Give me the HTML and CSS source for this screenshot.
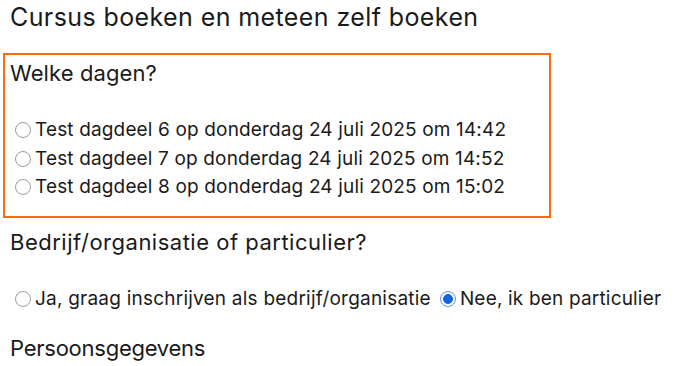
FILE: index.html
```html
<!DOCTYPE html>
<html lang="nl">
<head>
<meta charset="utf-8">
<link rel="stylesheet" href="styles.css">
</head>
<body>
<div class="page">
  <h1 class="title">Cursus boeken en meteen zelf boeken</h1>
  <div class="days-box">
    <div class="question">Welke dagen?</div>
    <div class="options">
      <label class="opt"><input type="radio" name="dag"> Test dagdeel 6 op donderdag 24 juli 2025 om 14:42</label>
      <label class="opt"><input type="radio" name="dag"> Test dagdeel 7 op donderdag 24 juli 2025 om 14:52</label>
      <label class="opt"><input type="radio" name="dag"> Test dagdeel 8 op donderdag 24 juli 2025 om 15:02</label>
    </div>
  </div>
  <div class="question q-outside">Bedrijf/organisatie of particulier?</div>
  <div class="inline-opts">
    <label class="opt"><input type="radio" name="type"> Ja, graag inschrijven als bedrijf/organisatie</label>
    <label class="opt"><input type="radio" name="type" checked> Nee, ik ben particulier</label>
  </div>
  <div class="question q-section">Persoonsgegevens</div>
</div>
</body>
</html>
```
FILE: styles.css
```css
html, body {
  margin: 0;
  padding: 0;
  background: #ffffff;
}
.page {
  padding: 1px 10px 0 10px;
  font-family: Inter, "Noto Sans", sans-serif;
  color: #1a1a1a;
}
.title {
  margin: 0;
  font-size: 25px;
  line-height: 32px;
  font-weight: 400;
  letter-spacing: 0.4px;
}
.days-box {
  margin: 20px 0 0 -7px;
  width: 534px;
  border: 2px solid #ff6a13;
  padding: 4px 5px 14px 5px;
}
.question {
  font-size: 22px;
  line-height: 28px;
  letter-spacing: 0.1px;
}
.q-outside {
  margin-top: 10px;
  letter-spacing: 0.5px;
}
.options {
  margin-top: 29px;
  display: flex;
  flex-direction: column;
}
.opt {
  font-size: 19px;
  line-height: 28.5px;
  letter-spacing: 0.15px;
  display: flex;
  align-items: center;
}
.opt input {
  appearance: none;
  -webkit-appearance: none;
  box-sizing: border-box;
  width: 16px;
  height: 16px;
  margin: 0 4px 0 5px;
  border: 1px solid #9c9c9c;
  border-radius: 50%;
  background: #fff;
  flex: none;
}
.opt input:checked {
  border: 1.5px solid #5a93ee;
  background: radial-gradient(circle, #1463e3 0 4.6px, #ffffff 5.2px);
}
.inline-opts {
  margin-top: 29px;
  display: flex;
  gap: 4px;
}
.inline-opts .opt {
  letter-spacing: 0.22px;
}
.inline-opts .opt + .opt {
  letter-spacing: 0.18px;
}
.q-section {
  margin-top: 21px;
  letter-spacing: -0.25px;
}
```
